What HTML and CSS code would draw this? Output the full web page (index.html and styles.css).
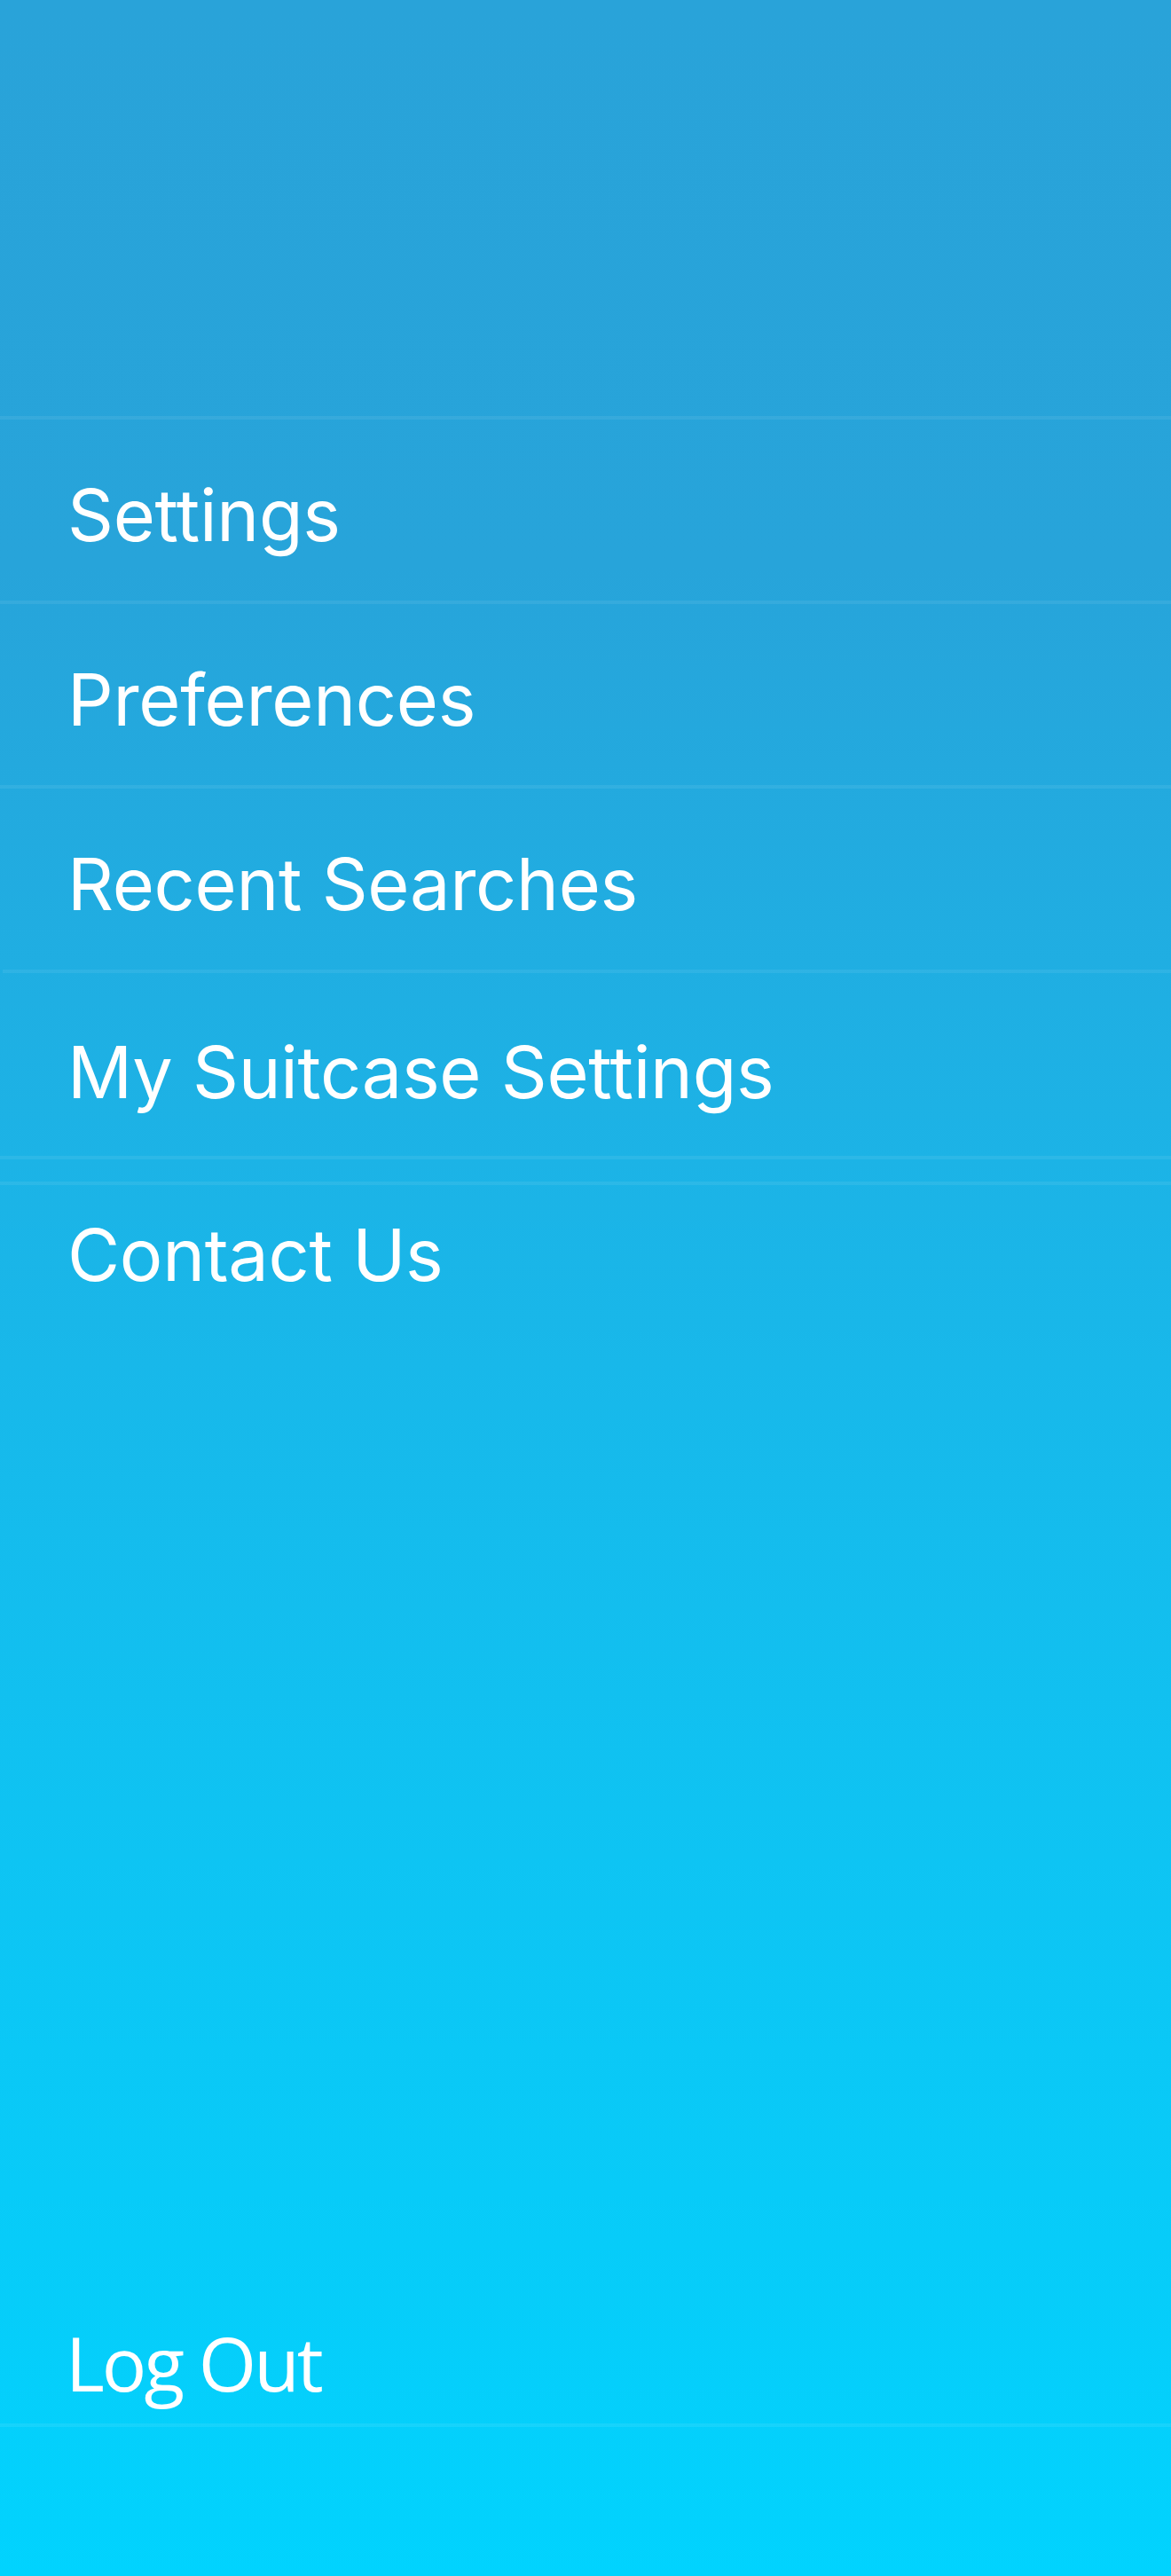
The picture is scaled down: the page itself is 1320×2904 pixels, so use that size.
FILE: index.html
```html
<!DOCTYPE html>
<html lang="en">
<head>
<meta charset="utf-8">
<title>Menu</title>
<link rel="stylesheet" href="styles.css">
</head>
<body>
<nav class="drawer">
  <div class="drawer-header"></div>
  <ul class="menu">
    <li class="menu-item">Settings</li>
    <li class="menu-item">Preferences</li>
    <li class="menu-item">Recent Searches</li>
    <li class="menu-item menu-item--inset">My Suitcase Settings</li>
    <li class="menu-divider"></li>
    <li class="menu-item menu-item--contact">Contact Us</li>
  </ul>
  <div class="drawer-spacer"></div>
  <div class="logout">Log Out</div>
  <div class="drawer-footer"></div>
</nav>
</body>
</html>
```
FILE: styles.css
```css
html, body {
  margin: 0;
  padding: 0;
}

body {
  width: 1320px;
  height: 2904px;
  font-family: Inter, "Liberation Sans", sans-serif;
  color: #ffffff;
}

.drawer {
  display: flex;
  flex-direction: column;
  height: 2904px;
  background: linear-gradient(180deg, #29a3d9 0%, #27a4da 22%, #1cb3e6 45%, #0ec4f3 72%, #01d3fe 100%);
}

.drawer-header {
  height: 469px;
  flex: none;
}

.menu {
  list-style: none;
  margin: 0;
  padding: 0;
}

.menu-item {
  box-sizing: border-box;
  height: 208px;
  border-top: 4px solid rgba(255, 255, 255, 0.07);
  padding: 66px 0 0 76px;
  font-family: Inter, "Liberation Sans", sans-serif;
  font-size: 81px;
  line-height: 84px;
  font-weight: 400;
  letter-spacing: -0.3px;
}

.menu-item--inset {
  margin-left: 3px;
  padding: 70px 0 0 73px;
  height: 210px;
}

.menu-divider {
  box-sizing: border-box;
  height: 29px;
  border-top: 4px solid rgba(255, 255, 255, 0.07);
}

.menu-item--contact {
  height: auto;
  padding-top: 37px;
}

.drawer-spacer {
  flex: 1;
}

.logout {
  padding: 0 0 26px 74px;
  font-family: "Open Sans", "Noto Sans", sans-serif;
  font-size: 84px;
  line-height: 84px;
  letter-spacing: -3px;
  border-bottom: 4px solid rgba(255, 255, 255, 0.08);
}

.drawer-footer {
  height: 168px;
  flex: none;
}
```
